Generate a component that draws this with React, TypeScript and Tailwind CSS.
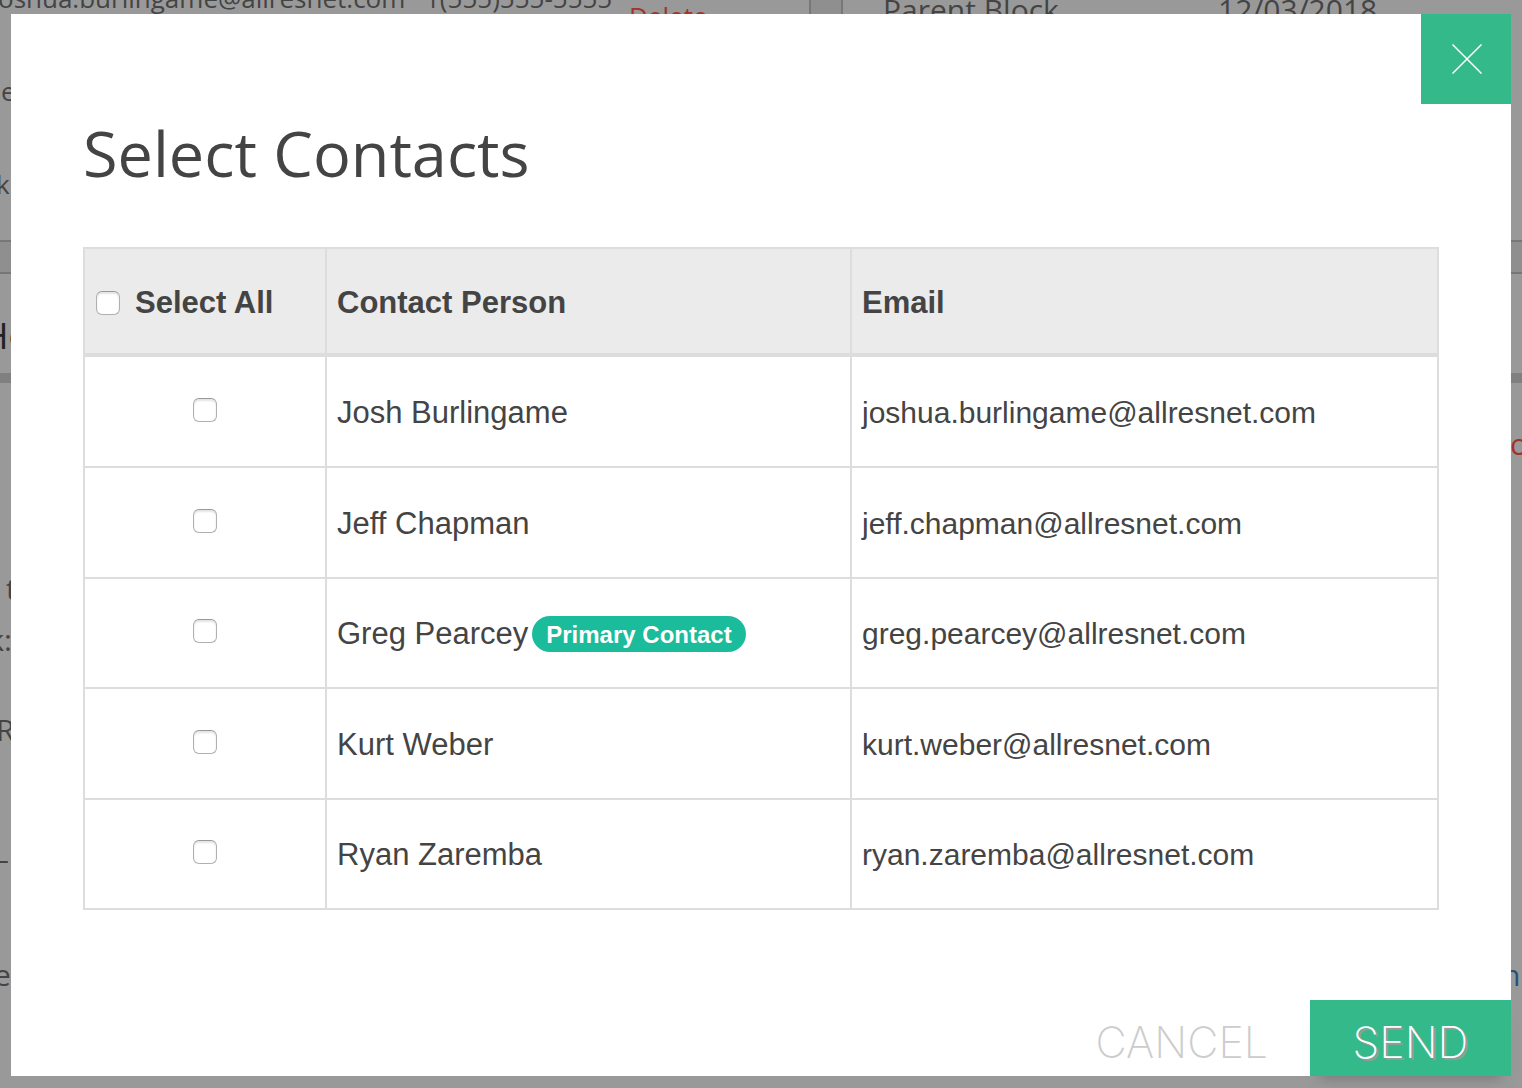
import { useState } from "react";

type Contact = { name: string; email: string; primary?: boolean };

const contacts: Contact[] = [
  { name: "Josh Burlingame", email: "joshua.burlingame@allresnet.com" },
  { name: "Jeff Chapman", email: "jeff.chapman@allresnet.com" },
  { name: "Greg Pearcey", email: "greg.pearcey@allresnet.com", primary: true },
  { name: "Kurt Weber", email: "kurt.weber@allresnet.com" },
  { name: "Ryan Zaremba", email: "ryan.zaremba@allresnet.com" },
];

const checkboxClass =
  "block size-6 shrink-0 appearance-none rounded-md border border-[#b0b0b0] border-t-[#999] bg-white shadow-[inset_0_2px_2px_#e4e4e4] checked:bg-[#34ba8a]";

// The dimmed page that stays visible around the dialog.
function PageBehind() {
  return (
    <div
      aria-hidden="true"
      className="fixed inset-0 flex flex-col overflow-hidden bg-[#999] font-['Open_Sans',sans-serif] text-[30px] whitespace-nowrap text-[#444]"
    >
      <div className="flex h-60 shrink-0">
        <div className="w-[811px] shrink-0 border-r-2 border-[#777] text-[26px] leading-[93px]">
          <div className="-mt-12 flex h-[93px] items-start">
            <span className="-ml-0.5 w-[427px]">oshua.burlingame@allresnet.com</span>
            <span className="w-[204px]">1(555)555-5555</span>
            <span className="pt-[18px] text-[#a13329]">Delete</span>
          </div>
          <div className="pl-px">e</div>
          <div className="-ml-1">ku</div>
        </div>
        <div className="w-8 shrink-0 border-r-2 border-[#777] bg-[#8f8f8f]" />
        <div className="-mt-2.5 flex flex-1 pl-10 leading-10">
          <span className="w-[335px]">Parent Block</span>
          <span>12/03/2018</span>
        </div>
      </div>
      <div className="h-[34px] shrink-0 border-y-2 border-[#777] bg-[#8f8f8f]" />
      <div className="-ml-[18px] h-[99px] shrink-0 pt-[22px] text-4xl leading-20 text-[#222]">Ho</div>
      <div className="h-2.5 shrink-0 bg-[#808080]" />
      <div className="flex justify-end leading-[122px] text-[#a13329]">
        <span className="w-3">o</span>
      </div>
      <div className="mt-[58px] pl-1.5 leading-[51px]">t</div>
      <div className="w-3 self-start leading-[51px]">
        <div className="flex justify-end">k:</div>
      </div>
      <div className="-ml-1 leading-[130px]">R</div>
      <div className="-ml-1.5 leading-[128px]">–</div>
      <div className="flex justify-between leading-[104px]">
        <span className="-ml-1.5">e</span>
        <span className="w-5 text-[#24527a]">n'</span>
      </div>
    </div>
  );
}

export default function App() {
  const [selected, setSelected] = useState<string[]>([]);
  const toggle = (email: string) =>
    setSelected((s) => (s.includes(email) ? s.filter((e) => e !== email) : [...s, email]));
  const all = selected.length === contacts.length;

  return (
    <>
      <PageBehind />
      <div
        role="dialog"
        aria-modal="true"
        aria-labelledby="dialog-title"
        className="relative mx-[11px] mt-3.5 mb-3 flex flex-col bg-white font-['Liberation_Sans',Arial,sans-serif] text-[#444]"
      >
        <button
          type="button"
          aria-label="Close"
          className="absolute top-0 right-0 flex size-[90px] items-center justify-center bg-[#34ba8a]"
        >
          <svg viewBox="0 0 30 30" className="ml-0.5 size-[30px]" fill="none" stroke="white" strokeWidth="1.5">
            <path d="M.5.5 29.5 29.5M29.5.5.5 29.5" />
          </svg>
        </button>

        <div className="px-[72px] pt-[95px]">
          <h1 id="dialog-title" className="font-['Open_Sans',sans-serif] text-[63px] leading-[88px]">
            Select Contacts
          </h1>

          <table className="mt-[50px] w-full table-fixed border-collapse text-left text-[31px] leading-10">
            <colgroup>
              <col className="w-[242px]" />
              <col className="w-[525px]" />
              <col />
            </colgroup>
            <thead className="bg-[#ebebeb]">
              <tr className="h-[107px]">
                <th className="border-2 border-b-4 border-[#ddd] px-2.5 pt-1">
                  <label className="flex items-center gap-[15px] pl-px">
                    <input
                      type="checkbox"
                      className={checkboxClass}
                      checked={all}
                      onChange={() => setSelected(all ? [] : contacts.map((c) => c.email))}
                    />
                    Select All
                  </label>
                </th>
                <th className="border-2 border-b-4 border-[#ddd] px-2.5 pt-1">Contact Person</th>
                <th className="border-2 border-b-4 border-[#ddd] px-2.5 pt-1">Email</th>
              </tr>
            </thead>
            <tbody>
              {contacts.map((c) => (
                <tr key={c.email} className="h-[111px] first:h-[112px] last:h-[110px] nth-3:h-[110px]">
                  <td className="border-2 border-[#ddd] px-2.5 pb-1">
                    <input
                      type="checkbox"
                      aria-label={"Select " + c.name}
                      className={checkboxClass + " mx-auto"}
                      checked={selected.includes(c.email)}
                      onChange={() => toggle(c.email)}
                    />
                  </td>
                  <td className="border-2 border-[#ddd] px-2.5 pt-0.5">
                    <div className="flex items-center gap-1">
                      {c.name}
                      {c.primary && (
                        <span className="rounded-full bg-[#1abc9c] px-3.5 pt-0.5 text-2xl leading-[34px] font-bold text-white">
                          Primary Contact
                        </span>
                      )}
                    </div>
                  </td>
                  <td className="border-2 border-[#ddd] px-2.5 pt-0.5 text-[30px]">{c.email}</td>
                </tr>
              ))}
            </tbody>
          </table>
        </div>

        <div className="mt-[90px] flex justify-end font-['Inter',sans-serif] text-[43px] leading-[68px] font-extralight">
          <button type="button" className="px-[42px] pt-2 text-[#ccc]">
            CANCEL
          </button>
          <button
            type="button"
            className="w-[201px] bg-[#34ba8a] pt-2 text-center text-white shadow-[0_12px_12px_-10px_#777] [text-shadow:2px_2px_0_#999]"
          >
            SEND
          </button>
        </div>
      </div>
    </>
  );
}
